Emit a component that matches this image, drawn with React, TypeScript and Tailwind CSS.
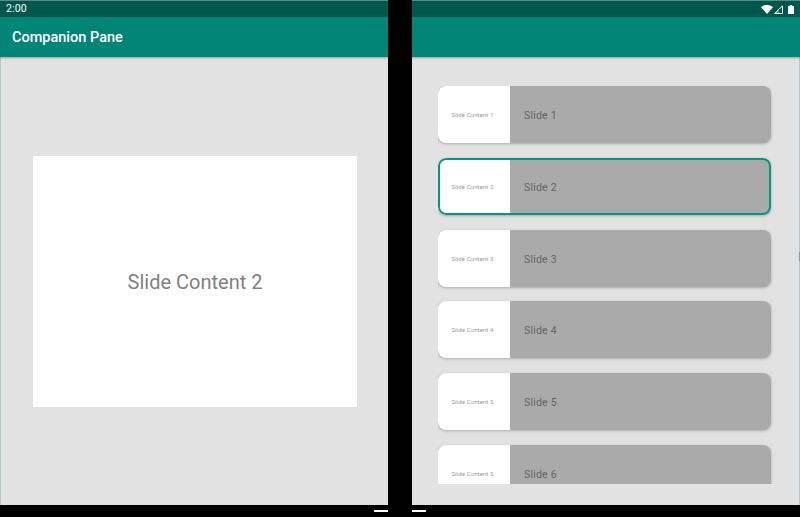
const SLIDES = [1, 2, 3, 4, 5, 6];
const ACTIVE = 2;
const font = "font-['Roboto',sans-serif]";

function StatusIcons() {
  return (
    <div className="flex items-center">
      <svg width="12" height="9" viewBox="0 0 12 9"><path d="M0 2.2C1.6.8 3.7 0 6 0s4.4.8 6 2.2L6 9z" fill="#fff" /></svg>
      <svg className="ml-[1px]" width="9" height="9" viewBox="0 0 9 9">
        <path d="M8.5.8v7.7H.8z" fill="none" stroke="#fff" strokeWidth="1" />
        <path d="M5 4v4.5H1z" fill="#fff" fillOpacity="0.35" />
      </svg>
      <svg className="ml-[5px]" width="6" height="9" viewBox="0 0 6 9"><path d="M1.8 0h2.4v1H6v8H0V1h1.8z" fill="#fff" /></svg>
    </div>
  );
}

function SlideCard({ n }: { n: number }) {
  const selected = n === ACTIVE;
  return (
    <div className="relative flex h-[57px] w-[333px] shrink-0 overflow-hidden rounded-[8px] bg-[#aaaaaa] shadow-[0_1px_3px_rgba(0,0,0,0.25)]">
      <div className="flex w-[72px] shrink-0 items-center justify-center bg-white pl-[1px] pr-[4px] text-[6px] tracking-[0.1px] text-[#9a9a9a]">
        Slide Content {n === 6 ? 5 : n}
      </div>
      <div className="flex flex-1 items-center pl-[14px] pt-[3px] text-[10.5px] tracking-[0.2px] text-[#646464]">Slide {n}</div>
      {selected && <div className="absolute inset-0 rounded-[8px] border-2 border-[#009688]" />}
    </div>
  );
}

export default function App() {
  return (
    <div className={`${font} flex h-[517px] w-[800px] flex-col overflow-hidden bg-black`}>
      <div className="flex h-[505px] justify-between">
        {/* left pane */}
        <div className="flex w-[388px] flex-col bg-[#e2e2e2]">
          <div className="flex h-[17px] items-center border-t border-[#5f8a84] bg-[#00574b] pl-[6px] text-[10.5px] tracking-[0.1px] text-white">2:00</div>
          <div className="z-10 flex h-[40px] items-center bg-[#008577] pl-[12px] pt-[2px] text-[14.5px] font-medium text-white shadow-[0_1px_2px_rgba(0,0,0,0.3)]">
            Companion Pane
          </div>
          <div className="flex flex-1 border-l border-[#b4c4cc] pl-[32px] pt-[99px]">
            <div className="flex h-[251px] w-[324px] items-center justify-center bg-white text-[20px] text-[#808080]">
              Slide Content 2
            </div>
          </div>
        </div>
        {/* right pane */}
        <div className="flex w-[388px] flex-col bg-[#e2e2e2]">
          <div className="flex h-[17px] items-center justify-end border-t border-[#5f8a84] bg-[#00574b] pr-[6px]">
            <StatusIcons />
          </div>
          <div className="z-10 h-[40px] bg-[#008577] shadow-[0_1px_2px_rgba(0,0,0,0.3)]" />
          <div className="relative flex-1 border-r border-[#b4c4cc]">
            <div className="ml-[26px] mt-[29px] flex h-[398px] flex-col gap-[14.75px] overflow-hidden">
              {SLIDES.map((n) => (
                <SlideCard key={n} n={n} />
              ))}
            </div>
            {/* edge marker on the right side */}
            <div className="absolute right-[-1px] top-[195px] h-[9px] w-[1px] bg-[#8a9aa2]" />
          </div>
        </div>
      </div>
      {/* nav bar handles */}
      <div className="flex h-[12px] items-center justify-center gap-[24px]">
        <div className="h-[2px] w-[14px] bg-white" />
        <div className="h-[2px] w-[14px] bg-white" />
      </div>
    </div>
  );
}
